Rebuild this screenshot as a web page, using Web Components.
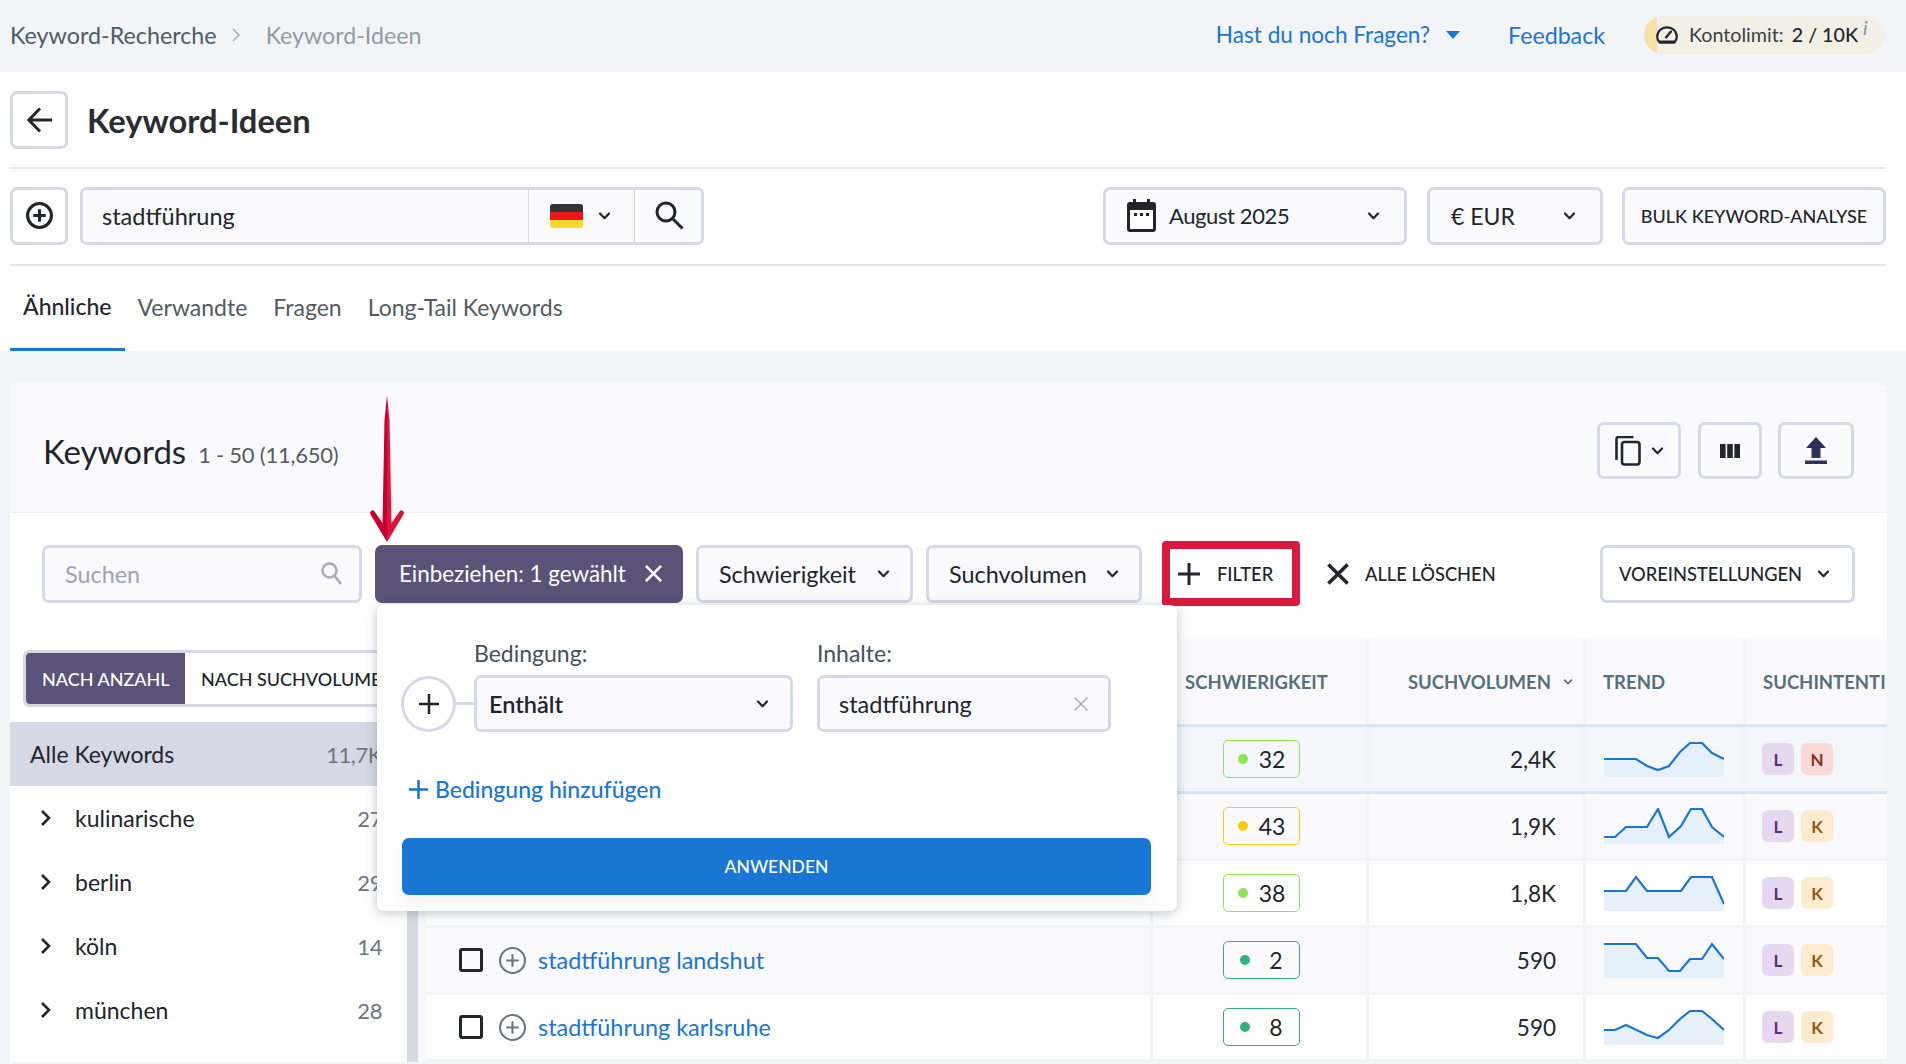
<!DOCTYPE html>
<html lang="de"><head><meta charset="utf-8"><title>Keyword-Ideen</title>
<style>
html,body{margin:0;padding:0;background:#fff;}
body{width:1906px;height:1064px;overflow:hidden;position:relative;font-family:Lato,"Noto Sans",sans-serif;font-size:23px;color:#22252b;}
</style></head><body>
<kw-app></kw-app>
<script>
const CH=(w=12,sw=2.2,c='#22252b')=>`<svg width="${w}" height="${Math.round(w*.62)}" viewBox="0 0 12 8" fill="none" stroke="${c}" stroke-width="${sw}" stroke-linecap="round" stroke-linejoin="round"><path d="M1.5 1.5 6 6.2l4.5-4.7"/></svg>`;
const XI=(s,c,sw=3)=>`<svg width="${s}" height="${s}" viewBox="0 0 20 20" fill="none" stroke="${c}" stroke-width="${sw}"><path d="M2 2l16 16M18 2 2 18"/></svg>`;
const PLUSC=(s,c,sw)=>`<svg width="${s}" height="${s}" viewBox="0 0 26 26" fill="none" stroke="${c}" stroke-width="${sw}"><circle cx="13" cy="13" r="${13-sw/2}"/><path d="M13 7v12M7 13h12"/></svg>`;
const def=(n,html)=>customElements.define(n,class extends HTMLElement{constructor(){super();this.attachShadow({mode:'open'}).innerHTML=html}});

const box=`display:inline-flex;align-items:center;box-sizing:border-box;height:58px;border:3px solid #d6d8e5;border-radius:7px;background:#fafafd;`;

def('kw-topbar',`<style>
:host{display:flex;align-items:center;height:72px;box-sizing:border-box;background:#f2f4f8;padding:0 21px 3px 10px;font-size:23.300px;}
.a{color:#4c5c68}.b{color:#8f9ba5;font-size:23.200px}.chev{margin:0 26px 0 15px;display:flex}
.sp{flex:1}.l{color:#1976d2}.f{font-size:22.600px}.fb{font-size:23.200px}
.tri{width:0;height:0;border:7px solid transparent;border-top:8px solid #1976d2;border-bottom:0;margin:0 48px 0 16px}
.pill{margin-left:39px;display:flex;align-items:center;height:38px;width:241px;box-sizing:border-box;border-radius:19px;background:linear-gradient(90deg,#f8dfa8 13px,#f3efe5 13px);padding-left:12px;font-size:19.700px;color:#3a3f45;position:relative}
.pill svg{margin-right:11px}.pill b{font-weight:500;color:#22252b;margin-left:8px}
.i{position:absolute;left:219px;top:-1px;font-style:italic;font-size:20px;line-height:24px;color:#7a93a6}
</style><span class="a">Keyword-Recherche</span><span class="chev"><svg width="8" height="14" viewBox="0 0 8 14" fill="none" stroke="#a5aeb6" stroke-width="1.6"><path d="M1 1l6 6-6 6"/></svg></span><span class="b">Keyword-Ideen</span><span class="sp"></span><span class="l f">Hast du noch Fragen?</span><span class="tri"></span><span class="l fb">Feedback</span>
<div class="pill"><svg width="22" height="18" viewBox="0 0 22 18" fill="none" stroke="#22252b" stroke-width="2.200"><path d="M3.500 16.500h15c1.500-1.500 2.300-3.500 2.300-5.700a9.800 9.500 0 0 0-19.600 0c0 2.200.8 4.200 2.300 5.700z"/><path d="M10 11.500 15 5.500" stroke-linecap="round"/><path d="M3.500 16h15" stroke-width="3"/></svg>Kontolimit:<b>2 / 10K</b><span class="i">i</span></div>`);

def('kw-title',`<style>
:host{display:flex;align-items:center;gap:19px;height:95px;margin:0 20px 0 10px;border-bottom:2px solid #e6e7f0;box-sizing:content-box;}
.back{${box}width:58px;height:58px;justify-content:center;background:#fff;padding-left:2px}
h1{margin:0;font:700 32.700px Lato,sans-serif;color:#2b2d32;padding-top:2px}
</style><div class="back"><svg width="26" height="26" viewBox="0 0 26 26" fill="none" stroke="#22252b" stroke-width="3"><path d="M25 13H2M13 1.500 1.800 13 13 24.500"/></svg></div><h1>Keyword-Ideen</h1>`);

def('kw-search',`<style>
:host{display:flex;align-items:center;height:95px;box-sizing:content-box;margin:0 20px 0 10px;border-bottom:2px solid #e6e7f0;font-size:23px;}
.wrap{display:flex;align-items:center;flex:1;margin-top:-2px}
.add{${box}width:58px;justify-content:center;background:#fff;margin-right:12px}
.in{${box}width:624px;overflow:visible;font-size:23.500px}
.t{flex:1;padding-left:19px}
.fl{width:106px;flex:none;align-self:stretch;margin:-3px 0;border-left:1px solid #d6d8e5;display:flex;align-items:center;padding-left:21px;box-sizing:border-box;gap:15px}
.flag{width:33px;height:24px;border-radius:3px;background:linear-gradient(#333 0 33%,#ef1515 33% 66%,#ffd72e 66%)}
.s{align-self:stretch;margin:-3px 0;width:67px;box-sizing:border-box;padding-left:3px;flex:none;border-left:1px solid #d6d8e5;display:flex;align-items:center;justify-content:center}
.sp{flex:1}
.date{${box}width:304px;padding:0 24px 0 21px;margin-right:20px}
.date span:nth-of-type(1){font-size:22px;letter-spacing:-.4px}
.cur{${box}width:176px;padding:0 24px 0 21px;margin-right:19px}
.bulk{${box}width:264px;justify-content:center;font-size:18px;font-weight:500}
.g{flex:1}
.date svg:first-child{margin-right:13px}
</style><div class="wrap"><div class="add">${PLUSC(27,'#22252b',3)}</div>
<div class="in"><span class="t">stadtführung</span><div class="fl"><div class="flag"></div>${CH(13)}</div><div class="s"><svg width="29" height="29" viewBox="0 0 29 29" fill="none" stroke="#22252b" stroke-width="3"><circle cx="11" cy="11" r="9"/><path d="M17.500 17.500 27.500 27.500"/></svg></div></div>
<span class="sp"></span>
<div class="date"><svg width="29" height="33" viewBox="0 0 29 33"><path fill="#22252b" d="M6 0h3v3h11V0h3v3h3a3 3 0 0 1 3 3v24a3 3 0 0 1-3 3H3a3 3 0 0 1-3-3V6a3 3 0 0 1 3-3h3z"/><rect x="3" y="11" width="23" height="19" fill="#fff"/><path fill="#22252b" d="M7 14h3v3H7zM13 14h3v3h-3zM19 14h3v3h-3z"/></svg><span>August 2025</span><span class="g"></span>${CH(13)}</div>
<div class="cur"><span>€ EUR</span><span class="g"></span>${CH(13)}</div>
<div class="bulk">BULK KEYWORD-ANALYSE</div></div>`);

def('kw-tabs',`<style>
:host{display:flex;height:85px;margin-left:10px;font-size:23px;color:#555a60}
span{padding:0 13px;display:flex;align-items:center;box-sizing:border-box;padding-bottom:1px;border-bottom:3px solid transparent}
.on{color:#22252b;font-weight:500;border-bottom-color:#1976d2;padding-bottom:3px}
</style><span class="on">Ähnliche</span><span>Verwandte</span><span>Fragen</span><span>Long-Tail Keywords</span>`);

def('kw-card-head',`<style>
:host{display:flex;align-items:center;height:130px;background:#fafafd;border-bottom:1px solid #ecedf5;padding:6px 33px 0 33px;border-radius:8px 8px 0 0;box-sizing:border-box}
h2{margin:0;font:400 33px Lato,sans-serif;color:#22252b}
small{font-size:22px;letter-spacing:-.25px;color:#555a60;margin-left:12px;padding-top:8px}
.g{flex:1}
.b{${box}height:57px;justify-content:center;background:#fafafd}
.c{width:84px;gap:10px}.m{width:64px;margin:0 16px 0 17px}.u{width:76px}
</style><h2>Keywords</h2><small>1 - 50 (11,650)</small><span class="g"></span>
<div class="b c"><svg width="26" height="30" viewBox="0 0 26 30" fill="none" stroke="#22252b" stroke-width="2.600"><path d="M1.500 24V3a2 2 0 0 1 2-2h15"/><rect x="7" y="6" width="17.500" height="22.500" rx="2.500"/></svg>${CH(13)}</div>
<div class="b m"><svg width="20" height="14" viewBox="0 0 20 14" fill="#22252b"><path d="M0 0h5.600v14H0zM7.200 0h5.600v14H7.200zM14.400 0H20v14h-5.600z"/></svg></div>
<div class="b u"><svg width="22" height="27" viewBox="0 0 22 27" fill="#2e3156"><path d="M11 0 21 11h-5.500v10h-9V11H1zM0 23.500h22V27H0z"/></svg></div>`);

def('kw-filter-bar',`<style>
:host{display:flex;align-items:center;height:121px;background:#fff;padding:0 32px;box-sizing:border-box;font-size:23.400px}
.s{${box}width:320px;padding:0 17px 0 20px;justify-content:space-between;color:#9ea3b0;margin-right:13px}
.p{${box}width:308px;background:#5b5278;border:0;color:#fff;padding:0 20px 0 24px;justify-content:space-between;margin-right:13px;font-size:22.400px}
.c{${box}padding:0 20px;justify-content:space-between}
.r{box-sizing:border-box;width:138px;height:65px;border:8px solid #d81b3c;border-radius:4px;display:flex;align-items:center;gap:17px;font-size:18.300px;font-weight:500;padding-left:8px;margin:0 26px 0 20px}
.x{display:flex;align-items:center;gap:15px;font-size:18.300px;font-weight:500}
.g{flex:1}
.v{${box}width:255px;background:#fff;padding:0 22px 0 16px;justify-content:space-between;font-size:18.300px;font-weight:500}
</style><div class="s"><span>Suchen</span><svg width="21" height="23" viewBox="0 0 21 23" fill="none" stroke="#a6aab8" stroke-width="2.500"><circle cx="8.500" cy="8.500" r="7"/><path d="M13.500 14l6.500 8"/></svg></div>
<div class="p"><span>Einbeziehen: 1 gewählt</span>${XI(19,'#fff',2.800)}</div>
<div class="c" style="width:217px;margin-right:13px"><span>Schwierigkeit</span>${CH(13)}</div>
<div class="c" style="width:216px"><span>Suchvolumen</span>${CH(13)}</div>
<div class="r"><svg width="22" height="22" viewBox="0 0 22 22" fill="none" stroke="#22252b" stroke-width="3"><path d="M11 0v22M0 11h22"/></svg><span>FILTER</span></div>
<div class="x">${XI(24,'#22252b',3)}<span>ALLE LÖSCHEN</span></div><span class="g"></span>
<div class="v"><span>VOREINSTELLUNGEN</span>${CH(13)}</div>`);

customElements.define('kw-side-item',class extends HTMLElement{constructor(){super();const a=this.getAttribute('all')!==null;this.attachShadow({mode:'open'}).innerHTML=`<style>
:host{display:flex;align-items:center;height:64px;padding:0 25px 0 30px;font-size:23px;color:#22252b}
:host([all]){background:#d6d8e5;padding-left:20px;margin-bottom:0}
svg{margin-right:24px}b{font-weight:400;font-size:22px;letter-spacing:-.4px;color:#6c7580;margin-left:auto}
</style>${a?'':`<svg width="11" height="18" viewBox="0 0 11 18" fill="none" stroke="#22252b" stroke-width="2.600"><path d="M2 2l7 7-7 7"/></svg>`}<slot></slot><b>${this.getAttribute('n')}</b>`}});

def('kw-sidebar',`<style>
:host{display:flex;width:408px;background:#fff;flex:none;overflow:hidden}
.l{width:397px;flex:none}
.sb{width:11px;background:#d6d8e5;flex:none}
.t{display:flex;box-sizing:border-box;height:57px;width:520px;margin:11px 0 15px 13px;border:3px solid #d6d8e5;border-radius:6px;font-size:18px;font-weight:500;white-space:nowrap}
.t span{display:flex;align-items:center;padding:0 16px}.t .on{background:#5b5278;color:#fff;width:159px;box-sizing:border-box;border-radius:4px 0 0 4px}
</style><div class="l"><div class="t"><span class="on">NACH ANZAHL</span><span>NACH SUCHVOLUMEN</span></div>
<kw-side-item all n="11,7K">Alle Keywords</kw-side-item><kw-side-item n="27">kulinarische</kw-side-item><kw-side-item n="29">berlin</kw-side-item><kw-side-item n="14">köln</kw-side-item><kw-side-item n="28">münchen</kw-side-item></div><div class="sb"></div>`);

const COLS='727px 216px 217px 160px 141px';
def('kw-table-head',`<style>
:host{display:grid;grid-template-columns:${COLS};height:88px;background:#fafafd;font-size:18.500px;font-weight:700;color:#54707f;border-bottom:3px solid #d6e4f7;box-sizing:border-box}
div{display:flex;align-items:center;border-right:3px solid #f2f4f8;box-sizing:border-box;white-space:nowrap;overflow:hidden}
.h2{padding-left:32px}.h3{justify-content:flex-end;padding-right:10px;gap:12px}.h4{padding-left:17px}.h5{padding-left:17px;border:0}
</style><div></div><div class="h2">SCHWIERIGKEIT</div><div class="h3">SUCHVOLUMEN ${CH(10,2,'#54707f')}</div><div class="h4">TREND</div><div class="h5">SUCHINTENTI</div>`);

customElements.define('kw-row',class extends HTMLElement{constructor(){super();
const g=k=>this.getAttribute(k);const d=g('d'),c=g('c');const pts=g('pts');const single=d.length<2;const kw=g('kw');
this.attachShadow({mode:'open'}).innerHTML=`<style>
:host{display:grid;grid-template-columns:${COLS};height:67px;box-sizing:border-box;border-bottom:3px solid #f2f4f8;background:var(--bg,#fff);font-size:23px;color:#22252b}
:host([hl]){background:#f3f6fb;border-bottom-color:#d6e4f7}
:host>div,.cell{display:flex;align-items:center;border-right:3px solid #f2f4f8;box-sizing:border-box}
.k{padding-left:33px}.box{width:24px;height:24px;border:3px solid #22252b;border-radius:3px;box-sizing:border-box;margin-right:16px}
.k a{color:#1976d2;margin-left:12px;font-size:23.400px}
.p{margin-left:70px;width:77px;height:38px;box-sizing:border-box;border:1.500px solid ${c};border-radius:5px;display:flex;align-items:center;justify-content:center;gap:${single?19:11}px}
.p i{width:10px;height:10px;border-radius:50%;background:${c}}
.v{justify-content:flex-end;padding-right:27px;font-size:22.500px}
.sp{padding-left:18px}
.b{gap:7px;padding-left:16px;border:0!important}
.b span{width:32px;height:32px;border-radius:6px;display:flex;align-items:center;justify-content:center;font-size:17px;font-weight:700}
</style><div class="k">${kw?`<span class="box"></span>${PLUSC(27,'#6c7580',2)}<a>${kw}</a>`:''}</div><div><span class="p"><i></i><span>${d}</span></span></div><div class="v">${g('v')}</div>
<div class="sp"><svg width="120" height="36" viewBox="0 0 120 36"><polygon fill="#e6f0fa" points="0,36 ${pts} 120,36"/><polyline fill="none" stroke="#1976d2" stroke-width="2.200" points="${pts}"/></svg></div>
<div class="b"><span style="background:#e6d9ef;color:#5c2d7e">L</span>${g('i')==='N'?'<span style="background:#fadad7;color:#8e2a24">N</span>':'<span style="background:#fdebd0;color:#8f5a17">K</span>'}</div>`}});

def('kw-table',`<style>:host{display:block;width:1461px;flex:none}</style>
<kw-table-head></kw-table-head>
<kw-row hl style="--bg:#f3f6fb" d="32" c="#8ee44f" v="2,4K" i="N" pts="0,18 32,18 43,25 54,29 65,25 76,11 86,2 98,2 108,12 120,18"></kw-row>
<kw-row style="--bg:#fafafd" d="43" c="#ffcb05" v="1,9K" i="K" pts="0,29 11,29 22,19 43,19 54,1 65,29 77,18 87,1 98,1 108,19 120,29"></kw-row>
<kw-row d="38" c="#8ee44f" v="1,8K" i="K" pts="0,16 22,16 32,2 43,16 77,16 87,2 108,2 120,29"></kw-row>
<kw-row style="--bg:#fafafd" kw="stadtführung landshut" d="2" c="#2fb37f" v="590" i="K" pts="0,2 32,2 43,16 54,16 65,29 76,29 86,17 98,17 108,2 120,17"></kw-row>
<kw-row kw="stadtführung karlsruhe" d="8" c="#2fb37f" v="590" i="K" pts="0,21 11,21 22,16 43,26 54,29 65,21 76,10 86,2 98,2 108,10 120,21"></kw-row>`);

def('kw-card',`<style>
:host{display:block;background:#fff;border-radius:8px}
.body{display:flex;gap:8px;margin-top:5px;background:#f8f8fb}
</style><kw-card-head></kw-card-head><kw-filter-bar></kw-filter-bar><div class="body"><kw-sidebar></kw-sidebar><kw-table></kw-table></div>`);

def('kw-popover',`<style>
:host{position:absolute;left:377px;top:605px;width:800px;height:306px;box-sizing:border-box;background:#fff;border-radius:7px;box-shadow:0 2px 12px rgba(40,44,70,.28);padding:32px 26px 16px 24px;font-size:23px;color:#22252b;display:flex;flex-direction:column}
.row{display:flex;align-items:flex-end}
.circ{width:55px;height:56px;box-sizing:border-box;border:3px solid #d6d8e5;border-radius:50%;display:flex;align-items:center;justify-content:center;flex:none}
.ln{width:18px;height:3px;background:#d6d8e5;margin-bottom:27px;flex:none}
.f{display:flex;flex-direction:column;gap:6px}.f label{color:#44525e;line-height:32px}
.i{${box}height:57px;padding:0 21px 0 12px;justify-content:space-between}
.add{display:flex;align-items:center;gap:7px;color:#1976d2;font-weight:500;margin:41px 0 0 8px;height:32px}
.ap{margin:33px 0 0 1px;height:57px;background:#1976d2;color:#fff;border-radius:7px;display:flex;align-items:center;justify-content:center;font-size:17.500px;font-weight:500;box-shadow:0 8px 16px rgba(40,44,70,.06)}
</style><div class="row"><div class="circ"><svg width="20" height="20" viewBox="0 0 20 20" stroke="#22252b" stroke-width="2.500"><path d="M10 0v20M0 10h20"/></svg></div><div class="ln"></div>
<div class="f" style="width:319px;margin-right:24px"><label>Bedingung:</label><div class="i"><span style="font-weight:600;font-size:23.500px">Enthält</span>${CH(13)}</div></div>
<div class="f" style="width:294px"><label>Inhalte:</label><div class="i" style="padding:0 19px"><span style="font-size:23.500px">stadtführung</span>${XI(16,'#a6aab8',1.800)}</div></div></div>
<div class="add"><svg width="19" height="19" viewBox="0 0 19 19" stroke="#1976d2" stroke-width="2.500"><path d="M9.500 0v19M0 9.500h19"/></svg><span>Bedingung hinzufügen</span></div>
<div class="ap">ANWENDEN</div>`);

def('kw-arrow',`<style>:host{position:absolute;left:369px;top:394px;width:36px;height:149px;display:block}</style><svg width="36" height="149" viewBox="0 0 36 149"><defs><linearGradient id="g" x1="0" x2="1"><stop offset="0" stop-color="#c4002c"/><stop offset=".5" stop-color="#c8002e"/><stop offset=".52" stop-color="#e0163f"/><stop offset="1" stop-color="#d81238"/></linearGradient></defs><path fill="url(#g)" d="M18 1 20.500 26 22.500 129 30.500 117.500Q32 115.500 34 117 35.500 118.500 34.500 120.500L18 148 1.500 120.500Q.5 118.500 2 117 4 115.500 5.500 117.500L13.500 129 15.500 26z"/></svg>`);

def('kw-app',`<style>
:host{display:block;position:relative;width:1906px;height:1064px;overflow:hidden;background:#fff}
.main{background:#f2f4f8;padding:32px 19px 0 10px;height:713px;box-sizing:border-box}
</style><kw-topbar></kw-topbar><kw-title></kw-title><kw-search></kw-search><kw-tabs></kw-tabs>
<div class="main"><kw-card></kw-card></div><kw-popover></kw-popover><kw-arrow></kw-arrow>`);
</script></body></html>
